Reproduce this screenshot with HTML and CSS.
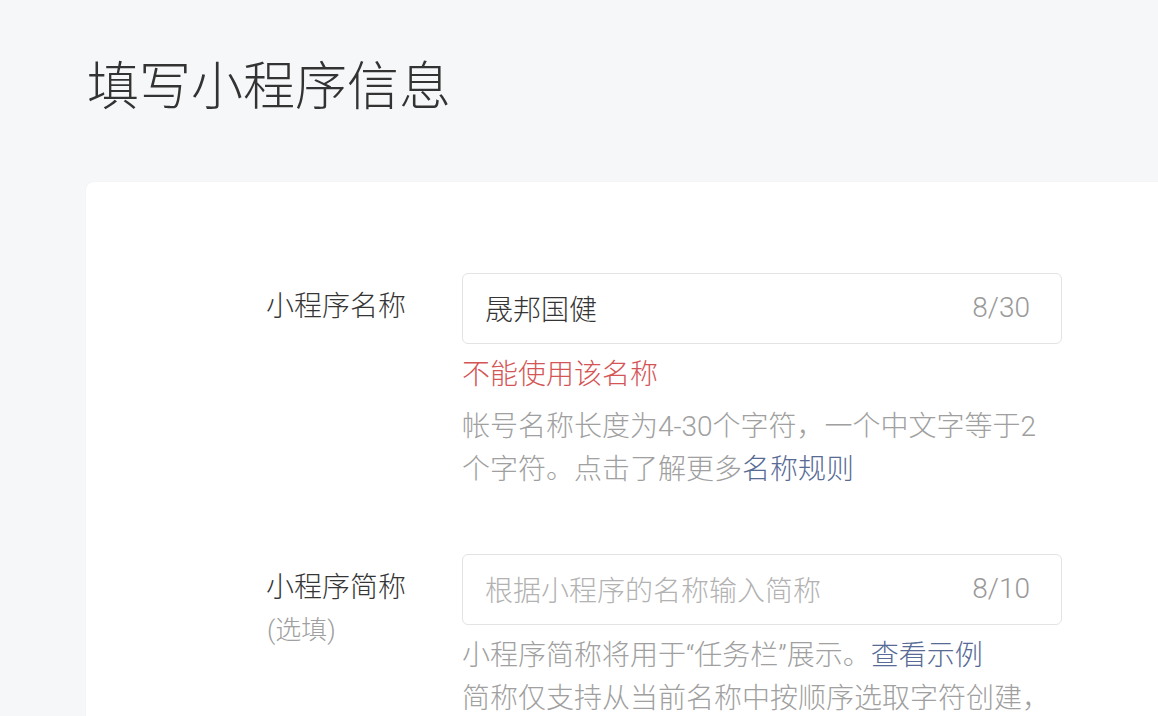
FILE: index.html
```html
<!DOCTYPE html>
<html lang="zh-CN">
<head>
<meta charset="utf-8">
<title>填写小程序信息</title>
<link rel="stylesheet" href="styles.css">
</head>
<body>
<div class="page">
  <h1 class="title">填写小程序信息</h1>
  <div class="card">
    <div class="row">
      <div class="label">小程序名称</div>
      <div class="field">
        <div class="input">
          <span class="value">晟邦国健</span>
          <span class="count">8/30</span>
        </div>
        <div class="error">不能使用该名称</div>
        <p class="hint">帐号名称长度为4-30个字符，一个中文字等于2个字符。点击了解更多<a class="link">名称规则</a></p>
      </div>
    </div>
    <div class="row row2">
      <div class="label">小程序简称<div class="optional">(选填)</div></div>
      <div class="field">
        <div class="input">
          <span class="placeholder">根据小程序的名称输入简称</span>
          <span class="count">8/10</span>
        </div>
        <p class="hint nowrap">小程序简称将用于“任务栏”展示。<a class="link">查看示例</a></p>
        <p class="hint nowrap tight">简称仅支持从当前名称中按顺序选取字符创建，</p>
      </div>
    </div>
  </div>
</div>
</body>
</html>
```
FILE: styles.css
```css
html, body {
  margin: 0;
  padding: 0;
  background: #f6f7f9;
  overflow: hidden;
  font-family: Roboto, "Liberation Sans", "Noto Sans CJK SC", sans-serif;
}
.page {
  padding: 53px 0 0 86px;
  width: 1200px;
}
.title {
  margin: 0 0 0 1px;
  font-size: 52px;
  line-height: 70px;
  font-weight: 300;
  color: #333;
  height: 70px;
}
.card {
  margin-top: 59px;
  background: #fff;
  border-radius: 8px 0 0 0;
  box-shadow: 0 0 2px rgba(0, 0, 0, 0.06);
  padding: 91px 0 0 180px;
  height: 600px;
}
.row {
  display: flex;
}
.row2 {
  margin-top: 63px;
}
.label {
  width: 196px;
  flex: none;
  padding-top: 12px;
  font-size: 28px;
  line-height: 43px;
  color: #353535;
  font-weight: 300;
}
.optional {
  color: #a0a0a0;
  font-size: 26px;
  margin-left: 1px;
}
.field {
  width: 600px;
}
.input {
  box-sizing: border-box;
  height: 71px;
  border: 1.5px solid #e3e3e3;
  border-radius: 6px;
  padding: 0 31px 2px 22px;
  display: flex;
  align-items: center;
  justify-content: space-between;
  font-size: 28px;
  font-weight: 300;
}
.value {
  color: #353535;
}
.placeholder {
  color: #b2b2b2;
}
.count {
  color: #999;
  font-size: 28px;
}
.error {
  margin-top: 9px;
  font-size: 28px;
  line-height: 43px;
  color: #d45555;
  font-weight: 300;
}
.hint {
  margin: 9px 0 0;
  font-size: 28px;
  line-height: 43px;
  color: #a0a0a0;
  width: 580px;
  font-weight: 300;
}
.nowrap {
  white-space: nowrap;
  width: auto;
}
.tight {
  margin-top: 0;
}
.link {
  color: #576b95;
}
```
